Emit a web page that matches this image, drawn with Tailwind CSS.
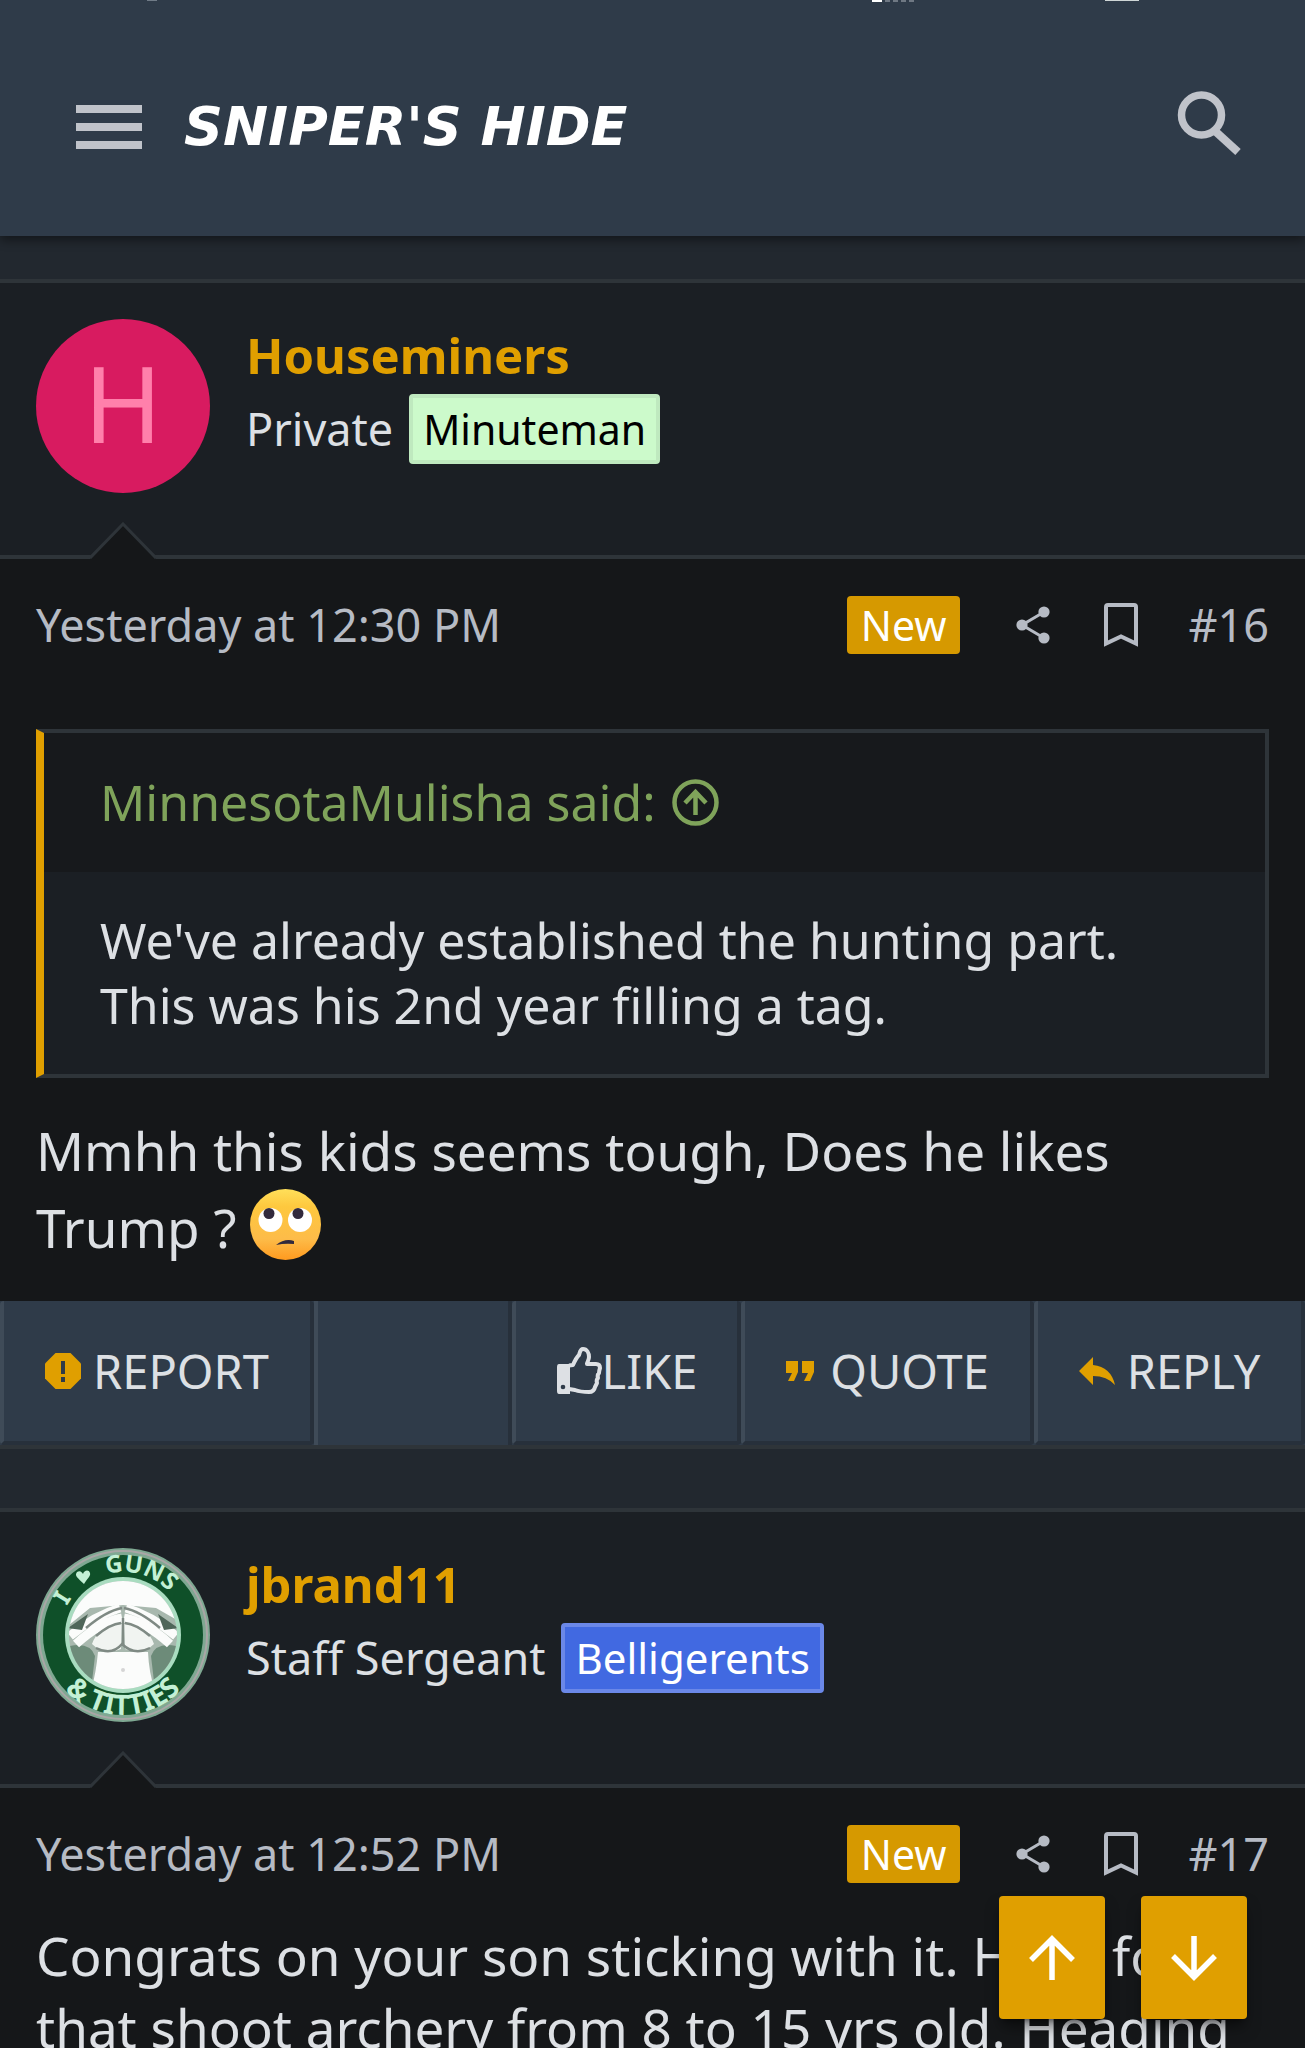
<!DOCTYPE html>
<html lang="en">
<head>
<meta charset="utf-8">
<meta name="viewport" content="width=device-width, initial-scale=1">
<title>Sniper's Hide</title>
<script src="https://cdn.jsdelivr.net/npm/@tailwindcss/browser@4"></script>
</head>
<body class="bg-[#22282f] font-['Noto_Sans',sans-serif] text-[#dde0e4]">
<svg class="hidden" aria-hidden="true">
  <symbol id="share" viewBox="0 0 34 38"><path d="M28 6 6 19l22 13" fill="none" stroke="currentColor" stroke-width="3"/><circle cx="28" cy="6" r="5.6" fill="currentColor"/><circle cx="6" cy="19" r="5.6" fill="currentColor"/><circle cx="28" cy="32" r="5.6" fill="currentColor"/></symbol>
  <symbol id="bookmark" viewBox="0 0 34 44"><path d="M2 40.500V4q0-2 2-2h26q2 0 2 2v36.500L17 33.500Z" fill="none" stroke="currentColor" stroke-width="4"/></symbol>
  <symbol id="notch" viewBox="0 0 66 37"><path d="M0 37 33 2l33 35Z" fill="#151719"/><path d="M0 36 33 2l33 34" fill="none" stroke="#2e3439" stroke-width="3"/></symbol>
</svg>
<div class="flex h-screen flex-col overflow-hidden">
  <header class="relative z-10 flex h-[236px] shrink-0 items-center bg-[#2f3b49] pt-[18px] pr-[63px] pl-[76px] shadow-[0_4px_10px_rgba(0,0,0,0.45)]">
    <!-- lower edges of the phone's status icons -->
    <div class="absolute top-0 left-[147px] h-px w-2.5 bg-[#707b87]"></div>
    <div class="absolute top-0 right-[391px] flex h-0.5 gap-[3px]"><i class="w-2.5 bg-white"></i><i class="w-[5px] bg-[#6f7883]"></i><i class="w-[5px] bg-[#6f7883]"></i><i class="w-[5px] bg-[#6f7883]"></i><i class="w-[5px] bg-[#6f7883]"></i></div>
    <div class="absolute top-0 right-[166px] h-px w-[34px] bg-[#cfd6d6]"></div>
    <button aria-label="Menu" class="text-[#c0c3ca]"><svg class="h-11 w-[66px]" viewBox="0 0 66 44"><path d="M0 4h66M0 22h66M0 40h66" stroke="currentColor" stroke-width="8"/></svg></button>
    <a href="#" class="ml-[42px] font-['DejaVu_Sans',sans-serif] text-[54px] leading-none font-bold whitespace-nowrap text-white italic">SNIPER'S HIDE</a>
    <button aria-label="Search" class="mb-2 ml-auto text-[#c0c3ca]"><svg class="h-16 w-[66px]" viewBox="0 0 66 64"><ellipse cx="25.500" cy="24" rx="20" ry="20" fill="none" stroke="currentColor" stroke-width="7.500"/><path d="m39 40 23 21" stroke="currentColor" stroke-width="8"/></svg></button>
  </header>
  <main class="min-h-0 flex-1">
    <article class="mt-[43px] border-y-4 border-[#2e3439] bg-[#151719]">
      <div class="relative flex h-[276px] gap-9 border-b-4 border-[#2e3439] bg-[#1b1f24] px-9 pt-9">
        <a href="#" class="flex size-[174px] items-center justify-center rounded-full bg-[#d81b60] pb-2 text-[106px] leading-none text-[#ff80ab]">H</a>
        <div class="mt-1">
          <h4 class="text-[49px] leading-[64px] font-bold"><a href="#" class="text-[#e09f00]">Houseminers</a></h4>
          <div class="mt-[7px] flex items-center gap-4 text-[45px]"><span>Private</span><span class="h-[70px] rounded border-4 border-[#bfe9bf] bg-[#ccfacb] px-2.5 text-[41px] leading-[62px] text-black">Minuteman</span></div>
        </div>
        <svg class="absolute -bottom-1 left-[90px] h-[37px] w-[66px]"><use href="#notch"/></svg>
      </div>
      <div class="px-9">
        <div class="flex h-[132px] items-center text-[45px] text-[#b6bbc4]">
          <time>Yesterday at 12:30 PM</time>
          <span class="ml-auto rounded bg-[#d69900] px-3.5 text-[41px] leading-[58px] text-white">New</span>
          <a href="#" aria-label="Share" class="ml-14"><svg class="h-[38px] w-[34px]"><use href="#share"/></svg></a>
          <a href="#" aria-label="Bookmark" class="mr-[50px] ml-[54px]"><svg class="h-11 w-[34px]"><use href="#bookmark"/></svg></a>
          <a href="#">#16</a>
        </div>
        <blockquote class="mt-[38px] border-4 border-l-8 border-[#2e3439] border-l-[#e09f00] bg-[#1b1f24] text-[50px] leading-[65px]">
          <a href="#" class="flex h-[139px] items-center gap-4 bg-[#17191c] pl-14 text-[#7fa35a]">MinnesotaMulisha said: <svg class="size-[47px]" viewBox="0 0 47 47" fill="none" stroke="currentColor" stroke-width="4.500"><circle cx="23.500" cy="23.500" r="21"/><path d="M23.500 36V13M13 24l10.500-11L34 24"/></svg></a>
          <p class="py-9 pl-14">We've already established the hunting part.<br>This was his 2nd year filling a tag.</p>
        </blockquote>
        <p class="pt-[34px] pb-[35px] text-[53px] leading-[77px]">Mmhh this kids seems tough, Does he likes<br>Trump ?
          <svg class="inline size-[71px] align-[-12px]" viewBox="0 0 71 71" role="img" aria-label="Eye roll"><defs><linearGradient id="face" x2="0" y2="1"><stop stop-color="#ffdf5a"/><stop offset=".25" stop-color="#fec83e"/><stop offset=".7" stop-color="#fdbc49"/><stop offset="1" stop-color="#ff9a1f"/></linearGradient></defs><circle cx="35.500" cy="35.500" r="35.500" fill="url(#face)"/><circle cx="20.500" cy="31" r="12" fill="#fff"/><circle cx="50" cy="31" r="12" fill="#fff"/><circle cx="19" cy="24.500" r="5.500" fill="#322a3d"/><circle cx="48" cy="24.500" r="5.500" fill="#322a3d"/><path d="M26 56q9-7 18-4v3q-9-1-18 1Z" fill="#322a3d"/></svg></p>
      </div>
      <div class="grid h-36 grid-cols-[314fr_198fr_229fr_293fr_271fr] bg-[#2f3b49] text-[47px] leading-none">
        <button class="flex items-center justify-center gap-3 rounded border-r-4 border-b-4 border-l-4 border-r-[#27303b] border-b-[#27303b] border-l-[#3f4b58]"><svg class="size-9 text-[#e09f00]" viewBox="0 0 36 36"><path d="M10.500 0h15L36 10.500v15L25.500 36h-15L0 25.500v-15Z" fill="currentColor"/><path d="M18 8v13M18 24v5" stroke="#2f3b49" stroke-width="4"/></svg>REPORT</button>
        <div class="border-r-4 border-l-4 border-r-[#27303b] border-l-[#3f4b58]"></div>
        <button class="flex items-center justify-center rounded border-r-4 border-b-4 border-l-4 border-r-[#27303b] border-b-[#27303b] border-l-[#3f4b58]"><svg class="h-[50px] w-[46px]" viewBox="0 0 46 50" fill="none" stroke="currentColor" stroke-width="4" stroke-linejoin="round"><path d="M13 19.500 17 19q3-7 6-10c1-3 1-6 4-6 4 0 6 4 6 8 0 3-2 5-2 7h9q4 0 4 4-1 3-1 5-2 2-1 5-2 2-1 5-1 2-2 4-1 5-6 5-9 0-14-2l-6-1"/><path d="M3 18h11v30H3q-2 0-2-3V21q0-3 2-3Z" fill="currentColor" stroke="none"/><circle cx="7" cy="41" r="2.300" fill="#2f3b49" stroke="none"/></svg>LIKE</button>
        <button class="flex items-center justify-center gap-4 rounded border-r-4 border-b-4 border-l-4 border-r-[#27303b] border-b-[#27303b] border-l-[#3f4b58]"><svg class="h-5 w-7 text-[#e09f00]" viewBox="0 0 28 20"><path d="M0 0h12v11L8 20H2l4-8H0ZM16 0h12v11l-4 9h-6l4-8h-6Z" fill="currentColor"/></svg>QUOTE</button>
        <button class="flex items-center justify-center gap-3 rounded border-r-4 border-b-4 border-l-4 border-r-[#27303b] border-b-[#27303b] border-l-[#3f4b58]"><svg class="h-7 w-9 text-[#e09f00]" viewBox="0 0 36 28"><path d="M14 0v8q18 2 22 20-8-9-22-9v9L0 14Z" fill="currentColor"/></svg>REPLY</button>
      </div>
    </article>
    <article class="mt-[59px] border-t-4 border-[#2e3439] bg-[#151719]">
      <div class="relative flex h-[276px] gap-9 border-b-4 border-[#2e3439] bg-[#1b1f24] px-9 pt-9">
        <a href="#" class="size-[174px]" aria-label="jbrand11">
          <svg class="size-[174px]" viewBox="0 0 174 174">
            <defs><path id="arcTop" d="M24 87a63 63 0 0 1 126 0"/><path id="arcBottom" d="M7 87a80 80 0 0 0 160 0"/><clipPath id="inner"><circle cx="87" cy="87" r="54"/></clipPath></defs>
            <circle cx="87" cy="87" r="87" fill="#7fa892"/><circle cx="87" cy="87" r="84" fill="none" stroke="#a9a6a6" stroke-width="2"/><circle cx="87" cy="87" r="80" fill="#0f5029"/><circle cx="87" cy="87" r="58" fill="#a9dcc0"/><circle cx="87" cy="87" r="54" fill="#a8b8ae"/>
            <g clip-path="url(#inner)">
              <path d="M28 28h118v47l-26-15-33-3-33 3-26 21Z" fill="#fbfcfb"/>
              <path d="M62 104q-2 22-7 38h64q-6-16-7-38Z" fill="#fbfcfb"/>
              <path d="M34 98q20-4 25 10l-4 34-22-20ZM140 98q-20-4-25 10l4 34 22-20Z" fill="#6d8b79"/>
              <path d="M86 76q-24 2-30 20 12 12 29 5ZM88 76q24 2 30 20-12 12-29 5Z" fill="#f1f4f1"/>
              <path d="M34 88q24-20 50-28M140 88q-24-20-50-28M40 96q24-22 46-26M134 96q-24-22-46-26" stroke="#fbfcfb" stroke-width="9" fill="none"/>
              <path d="M50 80q20-17 36-20M124 80q-20-17-36-20M60 88q14-12 25-13M114 88q-14-12-25-13M87 70v27M60 100q16 8 26-4 12 12 28 4" stroke="#7f8a84" stroke-width="2.500" fill="none"/>
              <path d="m32 80 20-14-6 16ZM142 80l-20-14 6 16Z" fill="#4f6659"/>
              <circle cx="87" cy="122" r="2" fill="#d5d5d5"/>
            </g>
            <g fill="#c3f0d5" class="font-['Noto_Sans',sans-serif] font-bold"><text font-size="24"><textPath href="#arcTop" startOffset="30">I</textPath></text><text font-size="24"><textPath href="#arcTop" startOffset="82">GUNS</textPath></text><text font-size="28" text-anchor="middle"><textPath href="#arcBottom" startOffset="50%">&amp; TITTIES</textPath></text></g>
            <path d="M48 36c-6-6-10-8-7-12 3-2 5 0 6 2 1-4 6-5 7-1 1 3-3 6-6 11Z" fill="#c3f0d5"/>
          </svg>
        </a>
        <div class="mt-1">
          <h4 class="text-[49px] leading-[64px] font-bold"><a href="#" class="text-[#e09f00]">jbrand11</a></h4>
          <div class="mt-[7px] flex items-center gap-4 text-[45px]"><span>Staff Sergeant</span><span class="h-[70px] rounded border-4 border-[#6b88e8] bg-[#4169e1] px-2.5 text-[42px] leading-[62px] text-white">Belligerents</span></div>
        </div>
        <svg class="absolute -bottom-1 left-[90px] h-[37px] w-[66px]"><use href="#notch"/></svg>
      </div>
      <div class="px-9">
        <div class="flex h-[132px] items-center text-[45px] text-[#b6bbc4]">
          <time>Yesterday at 12:52 PM</time>
          <span class="ml-auto rounded bg-[#d69900] px-3.5 text-[41px] leading-[58px] text-white">New</span>
          <a href="#" aria-label="Share" class="ml-14"><svg class="h-[38px] w-[34px]"><use href="#share"/></svg></a>
          <a href="#" aria-label="Bookmark" class="mr-[50px] ml-[54px]"><svg class="h-11 w-[34px]"><use href="#bookmark"/></svg></a>
          <a href="#">#17</a>
        </div>
        <p class="text-[53px] leading-[72px] whitespace-nowrap">Congrats on your son sticking with it. Have four<br>that shoot archery from 8 to 15 yrs old. Heading</p>
      </div>
    </article>
  </main>
</div>
<nav class="fixed right-[58px] bottom-[29px] z-20 flex gap-9 text-white">
  <button aria-label="To top" class="flex h-[123px] w-[106px] items-center justify-center rounded bg-[#e09f00] shadow-lg shadow-black/50"><svg class="size-[46px]" viewBox="0 0 46 46" fill="none" stroke="currentColor" stroke-width="5.500"><path d="M23 45V4M2 25 23 4l21 21"/></svg></button>
  <button aria-label="To bottom" class="flex h-[123px] w-[106px] items-center justify-center rounded bg-[#e09f00] shadow-lg shadow-black/50"><svg class="size-[46px]" viewBox="0 0 46 46" fill="none" stroke="currentColor" stroke-width="5.500"><path d="M23 1v41M2 21l21 21 21-21"/></svg></button>
</nav>
</body>
</html>
